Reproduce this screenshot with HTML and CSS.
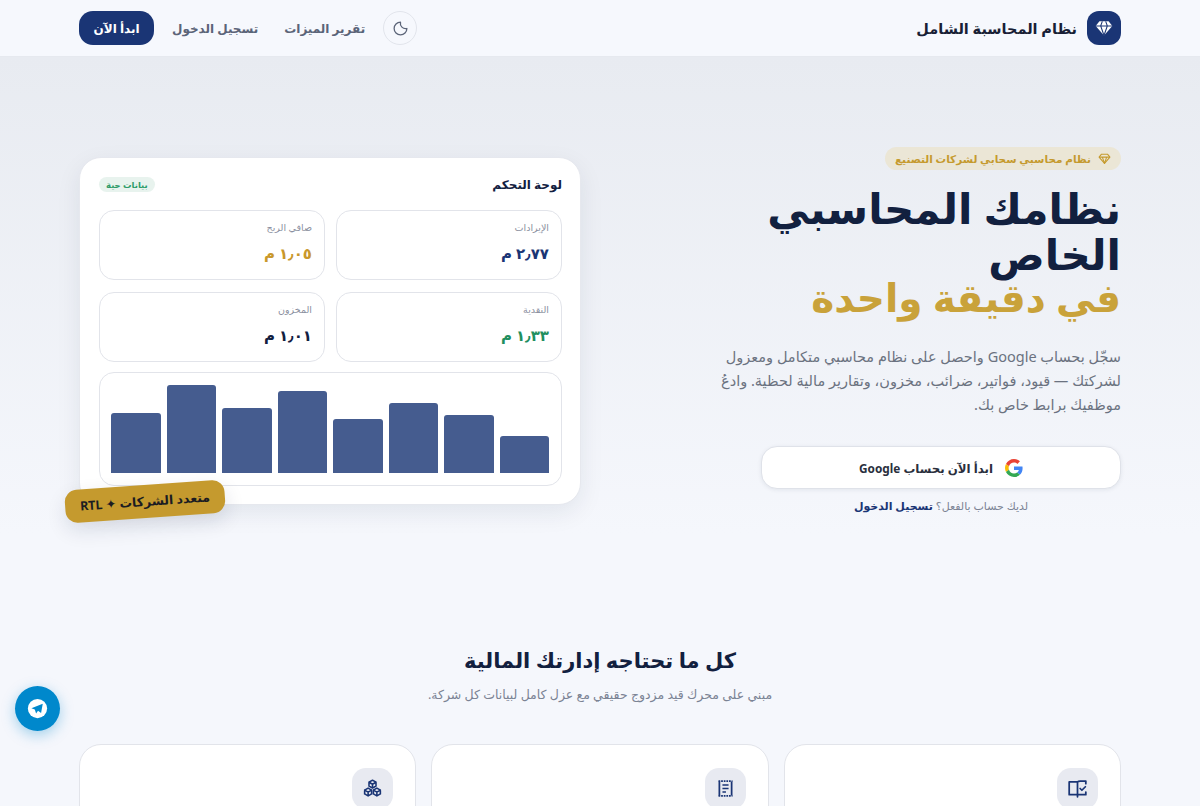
FILE: index.html
```html
<!DOCTYPE html>
<html lang="ar" dir="rtl">
<head>
  <meta charset="UTF-8">
  <meta name="viewport" content="width=device-width, initial-scale=1.0">
  <title>نظام المحاسبة الشامل</title>
  <link rel="stylesheet" href="styles.css">
</head>
<body>

  <header class="topbar">
    <div class="wrap topbar-row">
      <a class="brand" href="#">
        <span class="brand-logo">
          <svg viewBox="0 0 24 24" width="20" height="20" fill="#fff"><path d="M6.5 4h11L22 9.5 12 21 2 9.5z"/><path d="M2 9.5h20M8 9.5 12 21l4-11.5M8 9.5 10 4M16 9.5 14 4" fill="none" stroke="#1a3575" stroke-width="1.3"/></svg>
        </span>
        <span class="brand-name">نظام المحاسبة الشامل</span>
      </a>
      <nav class="nav">
        <button class="theme-btn" type="button">
          <svg viewBox="0 0 24 24" width="17" height="17" fill="none" stroke="#5b6478" stroke-width="1.8" stroke-linecap="round" stroke-linejoin="round"><path d="M12 3a7.5 7.5 0 0 0 9 9 9 9 0 1 1-9-9z"/></svg>
        </button>
        <a class="nav-link" href="#">تقرير الميزات</a>
        <a class="nav-link" href="#">تسجيل الدخول</a>
        <a class="nav-cta" href="#">ابدأ الآن</a>
      </nav>
    </div>
  </header>

  <section class="hero">
    <div class="wrap hero-grid">
      <div class="hero-text">
        <span class="badge">
          <svg viewBox="0 0 24 24" width="13" height="13" fill="none" stroke="#c59a2e" stroke-width="2" stroke-linejoin="round"><path d="M6.5 4h11L22 9.5 12 21 2 9.5z"/><path d="M2 9.5h20M8 9.5 12 21l4-11.5"/></svg>
          نظام محاسبي سحابي لشركات التصنيع
        </span>
        <h1>نظامك المحاسبي الخاص <span class="gold">في دقيقة واحدة</span></h1>
        <p class="lead">سجّل بحساب Google واحصل على نظام محاسبي متكامل ومعزول لشركتك — قيود، فواتير، ضرائب، مخزون، وتقارير مالية لحظية. وادعُ موظفيك برابط خاص بك.</p>
        <a class="google-btn" href="#">
          <svg viewBox="0 0 48 48" width="18" height="18"><path fill="#EA4335" d="M24 9.5c3.5 0 6.7 1.3 9.1 3.5l6.8-6.8C35.8 2.4 30.2 0 24 0 14.6 0 6.5 5.4 2.6 13.2l7.9 6.2C12.4 13.6 17.7 9.5 24 9.5z"/><path fill="#4285F4" d="M46.9 24.5c0-1.6-.2-3.1-.4-4.5H24v9h12.9c-.6 3-2.2 5.5-4.7 7.2l7.6 5.9c4.5-4.1 7.1-10.2 7.1-17.6z"/><path fill="#FBBC05" d="M10.5 28.6c-.5-1.4-.8-3-.8-4.6s.3-3.2.8-4.6l-7.9-6.2C.9 16.5 0 20.1 0 24s.9 7.5 2.6 10.8z"/><path fill="#34A853" d="M24 48c6.5 0 11.9-2.1 15.8-5.8l-7.6-5.9c-2.1 1.4-4.9 2.3-8.2 2.3-6.3 0-11.6-4.2-13.5-9.9l-7.9 6.2C6.500 42.6 14.6 48 24 48z"/></svg>
          <span>ابدأ الآن بحساب Google</span>
        </a>
        <p class="signin-note">لديك حساب بالفعل؟ <a href="#">تسجيل الدخول</a></p>
      </div>

      <div class="dash-card">
        <div class="dash-head">
          <h3>لوحة التحكم</h3>
          <span class="live-tag">بيانات حية</span>
        </div>
        <div class="stats">
          <div class="stat"><div class="stat-label">الإيرادات</div><div class="stat-value navy">٢٫٧٧ م</div></div>
          <div class="stat"><div class="stat-label">صافي الربح</div><div class="stat-value amber">١٫٠٥ م</div></div>
          <div class="stat"><div class="stat-label">النقدية</div><div class="stat-value green">١٫٣٣ م</div></div>
          <div class="stat"><div class="stat-label">المخزون</div><div class="stat-value dark">١٫٠١ م</div></div>
        </div>
        <div class="chart">
          <div class="bar" style="height: 37px"></div>
          <div class="bar" style="height: 58px"></div>
          <div class="bar" style="height: 70px"></div>
          <div class="bar" style="height: 54px"></div>
          <div class="bar" style="height: 82px"></div>
          <div class="bar" style="height: 65px"></div>
          <div class="bar" style="height: 88px"></div>
          <div class="bar" style="height: 60px"></div>
        </div>
        <div class="float-tag">متعدد الشركات ✦ RTL</div>
      </div>
    </div>
  </section>

  <section class="features">
    <div class="wrap">
      <h2>كل ما تحتاجه إدارتك المالية</h2>
      <p class="features-sub">مبني على محرك قيد مزدوج حقيقي مع عزل كامل لبيانات كل شركة.</p>
      <div class="feature-grid">
        <div class="feature">
          <span class="feature-icon">
            <svg viewBox="0 0 24 24" width="21" height="21" fill="none" stroke="#1a3575" stroke-width="2" stroke-linejoin="round" stroke-linecap="round"><path d="M2.5 4.5H12V19H2.5zM12 4.5c1-1 2-1 3-1h6.5v3M21.5 16v3H12M12 19v2.5"/><path d="m15 12 2 2 4-4"/></svg>
          </span>
        </div>
        <div class="feature">
          <span class="feature-icon">
            <svg viewBox="0 0 24 24" width="21" height="21" fill="none" stroke="#1a3575" stroke-width="2"><path d="M5 4v16M19 4v16"/><path d="M4 3.5h16M4 20.5h16" stroke-dasharray="2 1"/><path d="M8.5 8h7M8.5 12h7M8.5 16h4" stroke-width="1.8"/></svg>
          </span>
        </div>
        <div class="feature">
          <span class="feature-icon">
            <svg viewBox="0 0 24 24" width="21" height="21" fill="none" stroke="#1a3575" stroke-width="1.8" stroke-linejoin="round" stroke-linecap="round"><path d="M12 2.5 8 4.8v4.400l4 2.300 4-2.300V4.800zM8 4.800l4 2.300 4-2.300M12 7.100v4.400"/><path d="M7 11.500 3 13.800v4.400l4 2.300 4-2.300v-4.400zM3 13.800l4 2.300 4-2.300M7 16.100v4.400"/><path d="M17 11.500l-4 2.300v4.400l4 2.300 4-2.300v-4.400zM13 13.800l4 2.300 4-2.300M17 16.100v4.400"/></svg>
          </span>
        </div>
      </div>
    </div>
  </section>

  <a class="telegram-fab" href="#">
    <svg viewBox="0 0 24 24" width="21" height="21"><circle cx="12" cy="12" r="11" fill="#fff"/><path d="M18 6.500 5 11.600l3.900 1.500 1.500 4.500 2.200-3 3.500 2.500z" fill="#0088cc"/></svg>
  </a>

</body>
</html>
```

FILE: styles.css
```css
* {
  margin: 0;
  padding: 0;
  box-sizing: border-box;
}

html, body {
  height: 100%;
  overflow: hidden;
}

body {
  font-family: 'Noto Sans', 'DejaVu Sans', sans-serif;
  background: #f5f7fc;
  color: #12203f;
}

a {
  text-decoration: none;
  color: inherit;
}

.wrap {
  width: 1042px;
  margin: 0 auto;
}

/* Top bar */
.topbar {
  height: 57px;
  background: #f6f8fd;
  border-bottom: 1px solid #e6e9ef;
}

.topbar-row {
  height: 56px;
  display: flex;
  justify-content: space-between;
  align-items: center;
}

.brand {
  display: flex;
  align-items: center;
  gap: 10px;
}

.brand-logo {
  width: 34px;
  height: 34px;
  border-radius: 12px;
  background: #1a3575;
  display: flex;
  align-items: center;
  justify-content: center;
}

.brand-name {
  font-size: 14.5px;
  font-weight: 700;
  color: #191f36;
}

.nav {
  display: flex;
  align-items: center;
  gap: 18px;
}

.theme-btn {
  width: 34px;
  height: 34px;
  border-radius: 50%;
  border: 1px solid #e2e5ec;
  background: transparent;
  display: flex;
  align-items: center;
  justify-content: center;
}

.nav-link {
  font-size: 12px;
  font-weight: 600;
  color: #5b6478;
}

.nav-link + .nav-link {
  margin-inline-start: 8px;
}

.nav-cta {
  width: 75px;
  height: 34px;
  border-radius: 14px;
  background: #1a3575;
  color: #fff;
  font-size: 12px;
  font-weight: 700;
  display: flex;
  align-items: center;
  justify-content: center;
}

/* Hero */
.hero {
  height: 530px;
  padding-top: 90px;
  background: linear-gradient(180deg, #e8ebf1 0%, #f5f7fc 90%);
}

.hero-grid {
  display: grid;
  grid-template-columns: 1fr 502px;
  gap: 38px;
}

.hero-text {
  display: flex;
  flex-direction: column;
  align-items: flex-start;
  padding-inline-end: 90px;
}

.badge {
  height: 23px;
  padding: 0 10px;
  border-radius: 12px;
  background: #ebe6d6;
  color: #c59a2e;
  font-size: 10.5px;
  font-weight: 600;
  display: inline-flex;
  align-items: center;
  gap: 7px;
}

h1 {
  margin-top: 15px;
  font-size: 42px;
  line-height: 46px;
  font-weight: 800;
  color: #12203f;
}

.gold {
  display: block;
  font-size: 39px;
  line-height: 40px;
  color: #c9a23a;
}

.lead {
  margin-top: 27px;
  font-size: 14.5px;
  line-height: 24px;
  color: #6b7280;
}

.google-btn {
  margin-top: 30px;
  width: 360px;
  height: 43px;
  border-radius: 16px;
  background: #fff;
  border: 1px solid #dfe2e9;
  box-shadow: 0 1px 4px rgba(18, 32, 63, 0.08);
  display: flex;
  align-items: center;
  justify-content: center;
  gap: 12px;
  font-size: 11.8px;
  font-weight: 700;
  color: #2a2f3d;
}

.signin-note {
  width: 360px;
  margin-top: 9px;
  text-align: center;
  font-size: 11px;
  color: #7b8394;
}

.signin-note a {
  color: #1a3575;
  font-weight: 700;
}

/* Dashboard card */
.dash-card {
  position: relative;
  height: 348px;
  margin-top: 10px;
  padding: 19px 18px 19px 19px;
  background: #fff;
  border: 1px solid #e6e8ee;
  border-radius: 22px;
  box-shadow: 0 8px 24px rgba(18, 32, 63, 0.08);
}

.dash-head {
  display: flex;
  justify-content: space-between;
  align-items: center;
  height: 14px;
  margin-bottom: 19px;
}

.dash-head h3 {
  font-size: 12px;
  font-weight: 700;
  color: #12203f;
}

.live-tag {
  padding: 2px 7px;
  border-radius: 8px;
  background: #e8f3ee;
  color: #2f9c6a;
  font-size: 8.5px;
  font-weight: 700;
}

.stats {
  display: grid;
  grid-template-columns: 1fr 1fr;
  gap: 12px 11px;
}

.stat {
  height: 70px;
  padding: 10px 12px;
  border: 1px solid #e2e4ea;
  border-radius: 15px;
}

.stat-label {
  font-size: 9.5px;
  color: #8b90a0;
}

.stat-value {
  margin-top: 9px;
  font-size: 15px;
  font-weight: 800;
}

.navy { color: #1a3575; }
.amber { color: #c9982b; }
.green { color: #1f8f5f; }
.dark { color: #12203f; }

.chart {
  height: 114px;
  margin-top: 10px;
  padding: 0 12px 12px 11px;
  border: 1px solid #e2e4ea;
  border-radius: 15px;
  display: flex;
  align-items: flex-end;
  gap: 6px;
}

.bar {
  flex: 1;
  background: #455c8f;
  border-radius: 3px 3px 0 0;
}

.float-tag {
  position: absolute;
  left: -15px;
  bottom: -14px;
  width: 160px;
  height: 33px;
  border-radius: 12px;
  background: #c59a2e;
  color: #1b1c22;
  font-size: 12.5px;
  font-weight: 700;
  display: flex;
  align-items: center;
  justify-content: center;
  transform: rotate(-4deg);
  box-shadow: 0 8px 20px rgba(18, 32, 63, 0.12);
}

/* Features */
.features {
  padding-top: 60px;
  text-align: center;
}

h2 {
  font-size: 21px;
  line-height: 26px;
  font-weight: 800;
  color: #12203f;
}

.features-sub {
  margin-top: 13px;
  font-size: 12.5px;
  color: #7b8394;
}

.feature-grid {
  margin-top: 41px;
  display: grid;
  grid-template-columns: repeat(3, 1fr);
  gap: 15px;
}

.feature {
  height: 140px;
  padding: 23px 22px;
  background: #fff;
  border: 1px solid #e2e4ea;
  border-radius: 22px;
}

.feature-icon {
  width: 41px;
  height: 41px;
  border-radius: 14px;
  background: #e8eaf1;
  display: flex;
  align-items: center;
  justify-content: center;
}

.telegram-fab {
  position: fixed;
  left: 15px;
  bottom: 75px;
  width: 45px;
  height: 45px;
  border-radius: 50%;
  background: #0088cc;
  box-shadow: 0 4px 14px rgba(0, 136, 204, 0.35);
  display: flex;
  align-items: center;
  justify-content: center;
}
```
